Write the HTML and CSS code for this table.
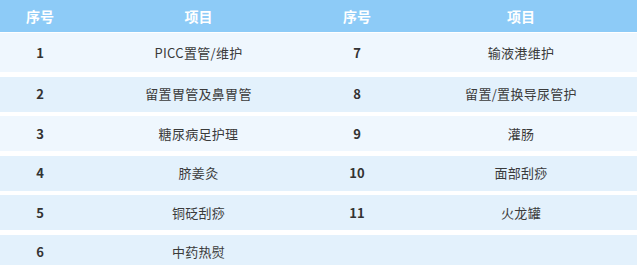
FILE: index.html
```html
<!DOCTYPE html>
<html lang="zh">
<head>
<meta charset="utf-8">
<link rel="stylesheet" href="styles.css">
</head>
<body>
<div class="table">
  <div class="row head">
    <div class="c num">序号</div><div class="c item">项目</div>
    <div class="c num">序号</div><div class="c item r">项目</div>
  </div>
  <div class="row first light">
    <div class="c num">1</div><div class="c item">PICC置管/维护</div>
    <div class="c num">7</div><div class="c item r">输液港维护</div>
  </div>
  <div class="row blue">
    <div class="c num">2</div><div class="c item">留置胃管及鼻胃管</div>
    <div class="c num">8</div><div class="c item r">留置/置换导尿管护</div>
  </div>
  <div class="row light">
    <div class="c num">3</div><div class="c item">糖尿病足护理</div>
    <div class="c num">9</div><div class="c item r">灌肠</div>
  </div>
  <div class="row blue">
    <div class="c num">4</div><div class="c item">脐姜灸</div>
    <div class="c num">10</div><div class="c item r">面部刮痧</div>
  </div>
  <div class="row blue">
    <div class="c num">5</div><div class="c item">铜砭刮痧</div>
    <div class="c num">11</div><div class="c item r">火龙罐</div>
  </div>
  <div class="row blue">
    <div class="c num">6</div><div class="c item">中药热熨</div>
    <div class="c num"></div><div class="c item r"></div>
  </div>
</div>
</body>
</html>
```
FILE: styles.css
```css
html, body {
  margin: 0;
  padding: 0;
  background: #ffffff;
  overflow: hidden;
}
body {
  width: 637px;
  height: 265px;
  font-family: "Noto Sans CJK SC", "Noto Sans", sans-serif;
}
.table {
  display: flex;
  flex-direction: column;
}
.row {
  display: grid;
  grid-template-columns: 80px 237px 80px 1fr;
  align-items: center;
  height: 35px;
  margin-top: 4.5px;
}
.head {
  height: 32px;
  margin-top: 0;
  background: #8dcbf7;
  color: #ffffff;
  font-weight: 700;
  font-size: 14px;
}
.first {
  height: 39px;
  margin-top: 1px;
}
.light {
  background: #eff7fe;
}
.blue {
  background: #e3f1fc;
}
.c {
  text-align: center;
  line-height: 20px;
}
.row:not(.head) .num {
  font-weight: 700;
  font-size: 13px;
  color: #333333;
}
.row:not(.head) .item {
  font-size: 13px;
  color: #3a3a3a;
  letter-spacing: 0.3px;
}
.r {
  padding-left: 8px;
}
```
